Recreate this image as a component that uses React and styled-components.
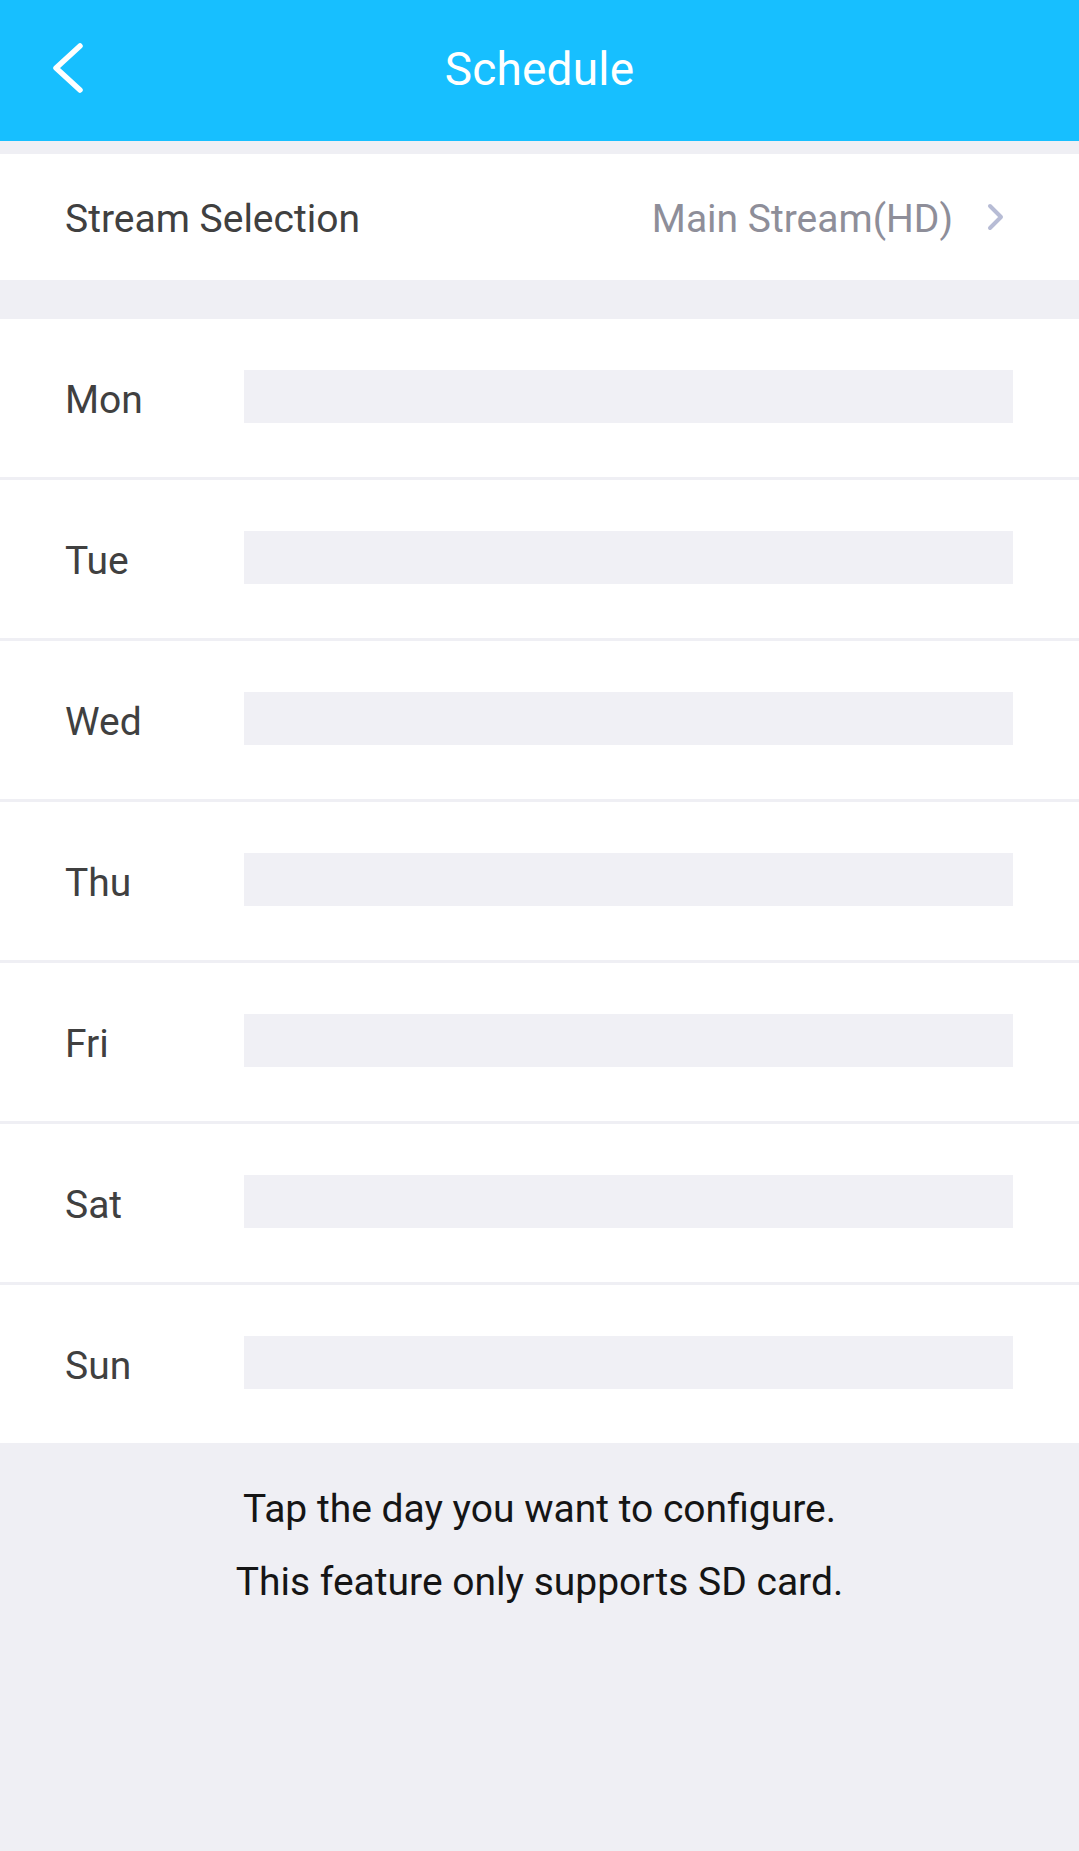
import React from "react";
import styled, { createGlobalStyle } from "styled-components";

const Global = createGlobalStyle`
  html, body { margin: 0; padding: 0; }
  body {
    background: #efeff4;
    font-family: Roboto, "Noto Sans", "Liberation Sans", sans-serif;
  }
`;

const Page = styled.div`
  min-height: 1851px;
  background: #efeff4;
  display: flex;
  flex-direction: column;
`;

const Header = styled.header`
  height: 141px;
  background: #17bfff;
  display: grid;
  grid-template-columns: 120px 1fr 120px;
  align-items: center;
`;

const BackButton = styled.button`
  border: 0;
  background: none;
  padding: 0 0 0 50px;
  height: 100%;
  display: flex;
  align-items: center;
  justify-content: flex-start;
  margin-top: -6px;
  cursor: pointer;
`;

const Title = styled.h1`
  margin: 0;
  margin-top: -4px;
  text-align: center;
  color: #ffffff;
  font-size: 46px;
  font-weight: 400;
  letter-spacing: 0.2px;
`;

const Section = styled.section`
  background: #ffffff;
  margin-top: ${(p) => p.$gap}px;
  display: flex;
  flex-direction: column;
`;

const StreamRow = styled.div`
  height: 126px;
  display: flex;
  align-items: center;
  padding: 0 74px 0 65px;
  gap: 34px;
`;

const Label = styled.span`
  font-size: 39px;
  color: #404040;
  line-height: 1;
  padding-top: 4px;
`;

const Value = styled.span`
  margin-left: auto;
  font-size: 39px;
  color: #8e8e99;
  line-height: 1;
  padding-top: 4px;
`;

const DayRow = styled.div`
  height: 158px;
  display: grid;
  grid-template-columns: 179px 1fr;
  align-items: center;
  padding: 0 66px 0 65px;
  border-bottom: ${(p) => (p.$last ? "none" : "3px solid #efeff4")};
`;

const DayBar = styled.div`
  height: 53px;
  background: #f0f0f5;
  margin-top: -4px;
`;

const Footer = styled.div`
  padding-top: 30px;
  display: flex;
  flex-direction: column;
  align-items: center;
`;

const Note = styled.p`
  margin: 0;
  font-size: 39px;
  line-height: 73px;
  color: #151515;
  text-align: center;
`;

const BackIcon = () => (
  <svg width="34" height="50" viewBox="0 0 34 50">
    <polyline
      points="30,3 6,25 30,47"
      fill="none"
      stroke="#ffffff"
      strokeWidth="5.5"
      strokeLinecap="round"
      strokeLinejoin="round"
    />
  </svg>
);

const Chevron = () => (
  <svg width="18" height="28" viewBox="0 0 18 28">
    <polyline
      points="3,3 14,14 3,25"
      fill="none"
      stroke="#b7bcd5"
      strokeWidth="4"
      strokeLinecap="round"
      strokeLinejoin="round"
    />
  </svg>
);

const days = ["Mon", "Tue", "Wed", "Thu", "Fri", "Sat", "Sun"];

export default function App() {
  return (
    <Page>
      <Global />
      <Header>
        <BackButton aria-label="Back">
          <BackIcon />
        </BackButton>
        <Title>Schedule</Title>
        <span />
      </Header>
      <Section $gap={13}>
        <StreamRow>
          <Label>Stream Selection</Label>
          <Value>Main Stream(HD)</Value>
          <Chevron />
        </StreamRow>
      </Section>
      <Section $gap={39}>
        {days.map((d, i) => (
          <DayRow key={d} $last={i === days.length - 1}>
            <Label>{d}</Label>
            <DayBar />
          </DayRow>
        ))}
      </Section>
      <Footer>
        <Note>Tap the day you want to configure.</Note>
        <Note>This feature only supports SD card.</Note>
      </Footer>
    </Page>
  );
}
